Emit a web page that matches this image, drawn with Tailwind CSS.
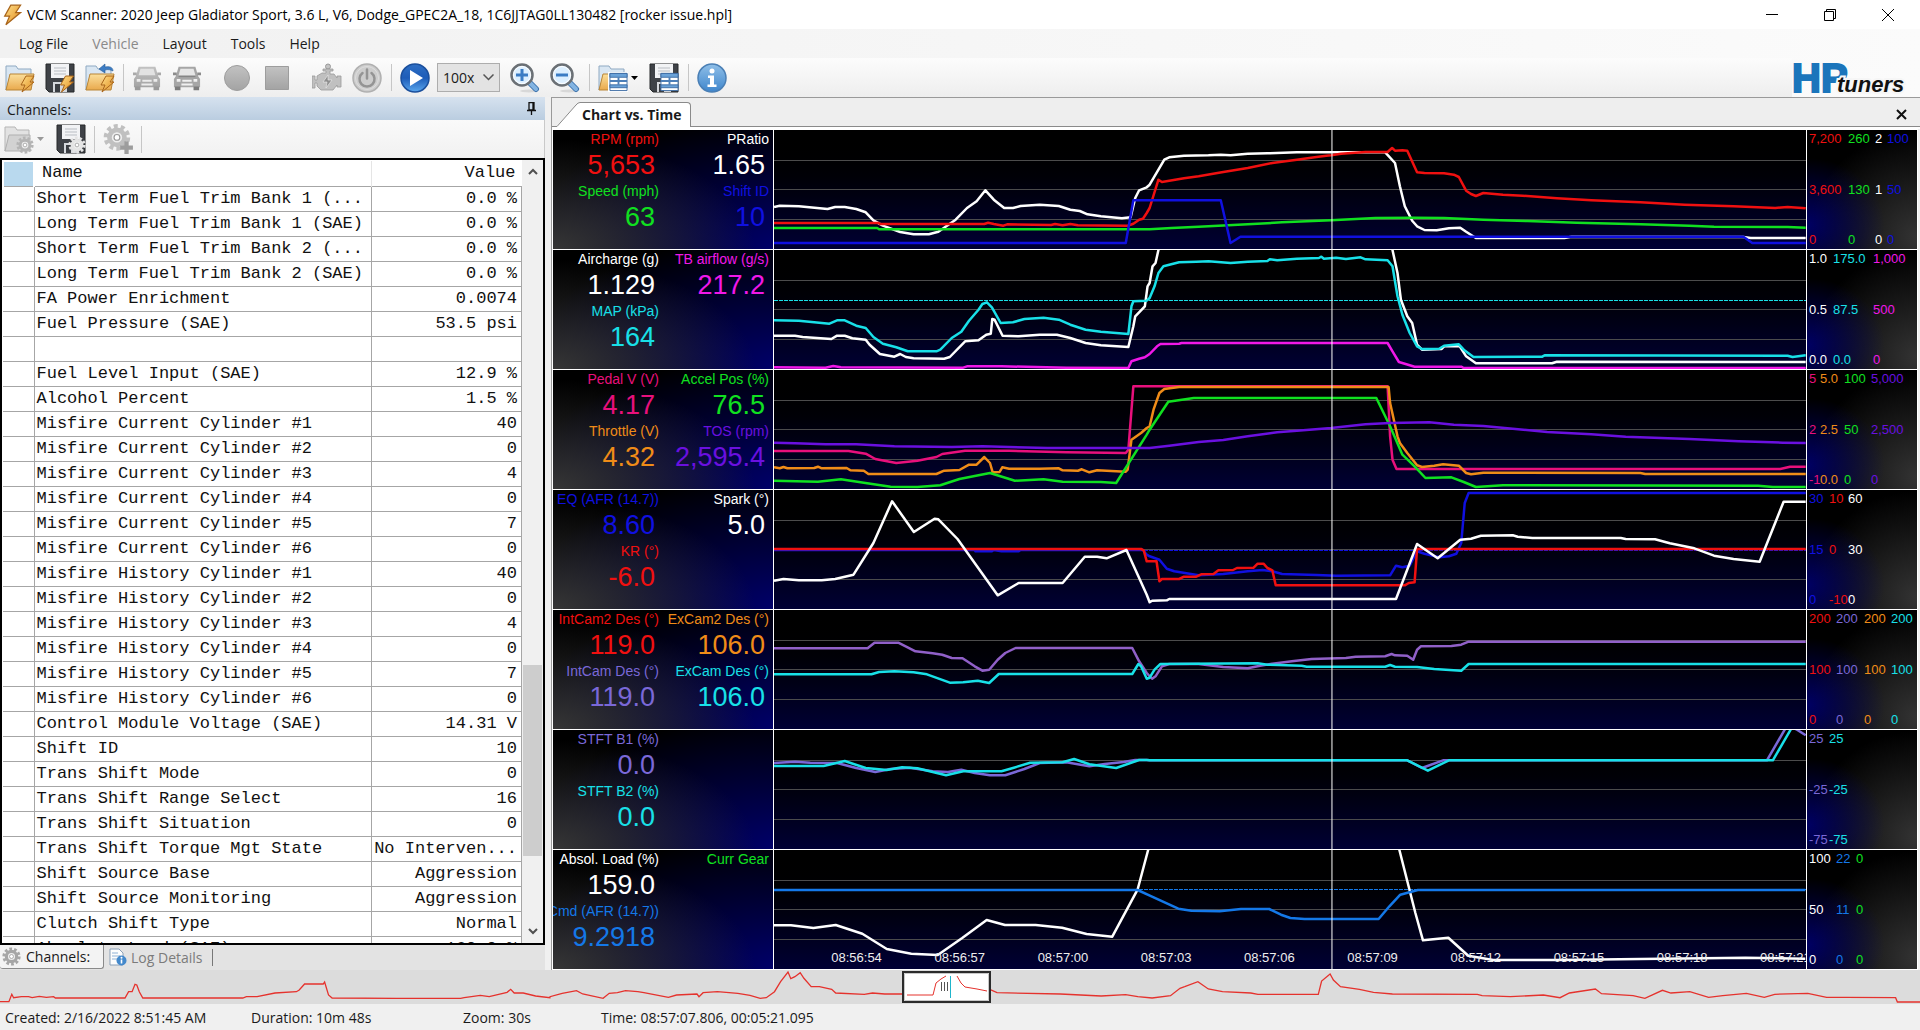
<!DOCTYPE html>
<html lang="en">
<head>
<meta charset="utf-8">
<title>VCM Scanner</title>
<script src="https://cdn.jsdelivr.net/npm/@tailwindcss/browser@4"></script>
</head>
<body class="flex h-screen flex-col overflow-hidden bg-[#f0f0f0] font-['Open_Sans','Noto_Sans',sans-serif] text-[14px] text-[#1a1a1a]">

<!-- shared icon parts -->
<svg width="0" height="0" class="absolute" aria-hidden="true">
  <defs>
    <linearGradient id="gFolder" x1="0" y1="0" x2="0" y2="1"><stop offset="0" stop-color="#fbdf9c"/><stop offset="1" stop-color="#e9a94c"/></linearGradient>
    <linearGradient id="gBolt" x1="0" y1="0" x2="1" y2="1"><stop offset="0" stop-color="#ffe08a"/><stop offset="1" stop-color="#e08a1c"/></linearGradient>
    <linearGradient id="gGray" x1="0" y1="0" x2="0" y2="1"><stop offset="0" stop-color="#c2c2c2"/><stop offset="1" stop-color="#a3a3a3"/></linearGradient>
    <linearGradient id="gPlay" x1="0" y1="0" x2="0" y2="1"><stop offset="0" stop-color="#2e6fc4"/><stop offset=".5" stop-color="#1d5cb8"/><stop offset="1" stop-color="#5aa7ee"/></linearGradient>
    <linearGradient id="gInfo" x1="0" y1="0" x2="0" y2="1"><stop offset="0" stop-color="#8fbfe8"/><stop offset="1" stop-color="#3f86cc"/></linearGradient>
    <symbol id="bolt" viewBox="0 0 16 18"><path d="M7 1h8l-4 6h4L3 17l3-7H2z" fill="url(#gBolt)" stroke="#a8641a" stroke-width="1"/></symbol>
    <symbol id="folder" viewBox="0 0 30 30"><path d="M1 27V3h10l2 3h13v6H6z" fill="#d9e6f2" stroke="#8fa9c2"/><path d="M5 11h24l-3 16H1z" fill="url(#gFolder)" stroke="#b98536"/></symbol>
    <symbol id="folderGray" viewBox="0 0 30 30"><path d="M1 27V3h10l2 3h12v6H6z" fill="#e2e2e2" stroke="#b5b5b5"/><path d="M5 11h21v16H1z" fill="#d2d2d2" stroke="#b0b0b0"/></symbol>
    <symbol id="floppy" viewBox="0 0 30 30"><path d="M1 1h28v28H4l-3-3z" fill="#3f4247" stroke="#26282b"/><path d="M6 1h18v14H6z" fill="#f2f3f5"/><path d="M9 5h12M9 8h12M9 11h12" stroke="#b9bdc3"/><path d="M8 19h14v10H8z" fill="#d5d8dc"/><path d="M10 21h5v8h-5z" fill="#3a3d42"/></symbol>
    <symbol id="grid" viewBox="0 0 20 20"><path d="M1 1h18v18H1z" fill="#fff" stroke="#3f6ea5"/><path d="M1 1h18v4H1zM1 13h18v3H1z" fill="#6aa2d8" stroke="#3f6ea5"/><path d="M10 5v8M1 9h18" stroke="#4d7fb8" stroke-width="2"/></symbol>
    <symbol id="car" viewBox="0 0 30 30"><path d="M6 3h18l3 10 2 3v9H1v-9l2-3z" fill="url(#gGray)"/><path d="M8 5h14l2 7H6z" fill="#e2e2e2"/><path d="M2 24h6v4H2zM22 24h6v4h-6z" fill="#9a9a9a"/><path d="M4 16h4v3H4zM22 16h4v3h-4zM10 17h10v2H10zM9 21h12v2H9z" fill="#ececec"/><path d="M0 9h4v3H0zM26 9h4v3h-4z" fill="#aaa"/></symbol>
    <symbol id="carDark" viewBox="0 0 30 30"><path d="M6 3h18l3 10 2 3v9H1v-9l2-3z" fill="#a6a6a6"/><path d="M8 5h14l2 7H6z" fill="#e6e6e6"/><path d="M2 24h6v4H2zM22 24h6v4h-6z" fill="#7c7c7c"/><path d="M4 16h4v3H4zM22 16h4v3h-4zM10 17h10v2H10zM9 21h12v2H9z" fill="#f0f0f0"/><path d="M6 13.500h18" stroke="#7e7e7e"/><path d="M0 9h4v3H0zM26 9h4v3h-4z" fill="#8c8c8c"/></symbol>
    <symbol id="gear" viewBox="0 0 24 24"><circle cx="12" cy="12" r="9.5" fill="none" stroke="currentColor" stroke-width="4" stroke-dasharray="3.4 2.57"/><circle cx="12" cy="12" r="6.5" fill="#eee" stroke="currentColor" stroke-width="4"/><circle cx="12" cy="12" r="2.5" fill="#fff" stroke="#999"/></symbol>
    <symbol id="lens" viewBox="0 0 30 30"><ellipse cx="19" cy="28" rx="9" ry="1.500" fill="#d8d8d8"/><path d="M19 19l7 7" stroke="#3d73ad" stroke-width="6" stroke-linecap="round"/><path d="M20 20l6 6" stroke="#83b4e2" stroke-width="4" stroke-linecap="round"/><circle cx="12" cy="12" r="10.500" fill="#dcefff" stroke="#6b7075" stroke-width="2.500"/><circle cx="12" cy="12" r="8.500" fill="none" stroke="#fff"/></symbol>
  </defs>
</svg>

<header class="shrink-0">
  <div class="flex h-[29px] items-center bg-white pl-[2px] text-black">
    <svg class="h-[22px] w-[20px]"><use href="#bolt"/></svg>
    <h1 class="ml-[5px] flex-1 text-[14px] whitespace-nowrap">VCM Scanner: 2020 Jeep Gladiator Sport, 3.6 L, V6, Dodge_GPEC2A_18, 1C6JJTAG0LL130482 [rocker issue.hpl]</h1>
    <button aria-label="Minimize" class="flex w-[58px] justify-center"><svg class="h-[12px] w-[12px]" viewBox="0 0 12 12"><path d="M0 5.500h12" stroke="#000"/></svg></button>
    <button aria-label="Restore" class="flex w-[58px] justify-center"><svg class="h-[12px] w-[12px]" viewBox="0 0 12 12"><path d="M.5 2.500h9v9h-9zM2.500 2.500v-2h9v9h-2" fill="none" stroke="#000"/></svg></button>
    <button aria-label="Close" class="mr-[3px] flex w-[58px] justify-center"><svg class="h-[12px] w-[12px]" viewBox="0 0 12 12"><path d="M0 0l12 12M12 0L0 12" stroke="#000"/></svg></button>
  </div>
  <div class="flex bg-gradient-to-r from-[#f1f1f1] to-[#fbfbfb]">
    <div class="flex-1">
      <nav class="flex h-[29px] items-center gap-[24px] pl-[19px] text-[14px]">
        <button>Log File</button><button class="text-[#8a8a8a]" disabled>Vehicle</button><button>Layout</button><button>Tools</button><button>Help</button>
      </nav>
      <div class="flex h-[39px] items-center bg-gradient-to-b from-[#fcfcfc] to-[#eeeeee]">
        <button aria-label="Open log" class="flex w-[40px] justify-center"><svg class="size-[30px]" viewBox="0 0 30 30"><use href="#folder"/><use href="#bolt" x="14" y="12" width="16" height="18"/></svg></button>
        <button aria-label="Save log" class="flex w-[40px] justify-center"><svg class="size-[30px]" viewBox="0 0 30 30"><use href="#floppy"/><use href="#bolt" x="13" y="12" width="17" height="18"/></svg></button>
        <button aria-label="Revert log" class="flex w-[40px] justify-center"><svg class="size-[30px]" viewBox="0 0 30 30"><use href="#folder"/><path d="M28 8c0-4-4-5-8-4V1l-6 5 6 4V7c3-1 6 0 8 1z" fill="#3c7cc4" stroke="#255a96" stroke-width=".6"/><use href="#bolt" x="14" y="12" width="16" height="18"/></svg></button>
        <span class="mx-[3px] h-[27px] w-px bg-[#c6c6c6]"></span>
        <button aria-label="Connect" disabled class="flex w-[40px] justify-center"><svg class="size-[28px]"><use href="#car"/></svg></button>
        <button aria-label="Vehicle info" disabled class="flex w-[40px] justify-center"><svg class="size-[28px]"><use href="#carDark"/></svg></button>
        <button aria-label="Record" disabled class="ml-[10px] flex w-[40px] justify-center"><svg class="size-[26px]" viewBox="0 0 26 26"><circle cx="13" cy="13" r="12.500" fill="url(#gGray)" stroke="#9d9d9d"/></svg></button>
        <button aria-label="Stop" disabled class="flex w-[40px] justify-center"><svg class="size-[24px]" viewBox="0 0 24 24"><path d="M.5.500h23v23H.5z" fill="url(#gGray)" stroke="#9d9d9d"/></svg></button>
        <button aria-label="Engine" disabled class="ml-[10px] flex w-[40px] justify-center"><svg class="size-[30px]" viewBox="0 0 30 30"><circle cx="16" cy="3.500" r="2.500" fill="#c4c4c4" stroke="#999"/><path d="M11 6h10v2h-3v3h4l3 4v-2h4v11h-4v-2l-4 5H9l-4-4v-3H3v5H0V13h3v4h2v-4l5-3h4V8h-3z" fill="#c0c0c0" stroke="#999" stroke-width=".8"/><path d="M16 12l-5 7h4l-1 6 6-8h-4z" fill="#8f8f8f" stroke="#eee" stroke-width=".6"/></svg></button>
        <button aria-label="Power" disabled class="flex w-[40px] justify-center"><svg class="size-[30px]" viewBox="0 0 30 30"><circle cx="15" cy="15" r="14" fill="#cdcdcd" stroke="#b0b0b0" stroke-width="1.500"/><circle cx="15" cy="15" r="11.500" fill="none" stroke="#dedede"/><path d="M10.500 10a7.500 7.500 0 1 0 9 0M15 6.500v9" fill="none" stroke="#949494" stroke-width="2.500" stroke-linecap="round"/></svg></button>
        <span class="mx-[4px] h-[27px] w-px bg-[#c6c6c6]"></span>
        <button aria-label="Play" class="flex w-[38px] justify-center"><svg class="size-[30px]" viewBox="0 0 30 30"><circle cx="15" cy="15" r="14" fill="url(#gPlay)" stroke="#1a4f9c" stroke-width="1.500"/><path d="M10 7l13 8-13 8z" fill="#fff"/></svg></button>
        <div class="relative ml-[3px] h-[29px] w-[63px]">
          <select aria-label="Playback speed" class="size-full appearance-none border border-[#adadad] bg-[#e3e3e3] pl-[5px] text-[14px]"><option>100x</option></select>
          <svg class="pointer-events-none absolute top-[11px] right-[6px] h-[7px] w-[11px]" viewBox="0 0 11 7"><path d="M.5.500l5 5 5-5" fill="none" stroke="#555" stroke-width="1.500"/></svg>
        </div>
        <button aria-label="Zoom in" class="ml-[5px] flex w-[40px] justify-center"><svg class="size-[30px]" viewBox="0 0 30 30"><use href="#lens"/><path d="M12 6v12M6 12h12" stroke="#3b7cc4" stroke-width="3"/></svg></button>
        <button aria-label="Zoom out" class="flex w-[40px] justify-center"><svg class="size-[30px]" viewBox="0 0 30 30"><use href="#lens"/><path d="M6 12h12" stroke="#3b7cc4" stroke-width="3"/></svg></button>
        <span class="mx-[4px] h-[27px] w-px bg-[#c6c6c6]"></span>
        <button aria-label="Open layout" class="flex w-[50px] items-center gap-[3px] pl-[4px]"><svg class="size-[30px]" viewBox="0 0 30 30"><use href="#folder"/><path d="M10 9h20v20H10z" fill="#fff"/><use href="#grid" x="11" y="9" width="19" height="20"/></svg><svg class="h-[4px] w-[7px]" viewBox="0 0 7 4"><path d="M0 0h7L3.500 4z"/></svg></button>
        <button aria-label="Save layout" class="flex w-[40px] justify-center"><svg class="size-[30px]" viewBox="0 0 30 30"><use href="#floppy"/><use href="#grid" x="11" y="9" width="19" height="20"/></svg></button>
        <span class="mx-[4px] h-[27px] w-px bg-[#c6c6c6]"></span>
        <button aria-label="About" class="flex w-[38px] justify-center"><svg class="size-[30px]" viewBox="0 0 30 30"><circle cx="15" cy="15" r="14" fill="url(#gInfo)" stroke="#4a7fb5" stroke-width="1.500"/><circle cx="15" cy="8" r="2.500" fill="#fff"/><path d="M11 12.500h6v9h2.500V24h-9v-2.500H13V15h-2z" fill="#fff"/></svg></button>
      </div>
    </div>
    <div class="relative w-[128px] font-['Liberation_Sans',sans-serif]">
      <span class="absolute top-[28px] left-0 text-[40px] leading-[42px] font-bold text-[#1b75bb] [-webkit-text-stroke:2px_#1b75bb]">HP</span>
      <span class="absolute top-[44px] left-[45px] text-[22px] leading-[24px] font-bold text-[#111] italic [paint-order:stroke] [-webkit-text-stroke:4px_#f6f6f6]">tuners</span>
    </div>
  </div>
</header>

<main class="flex min-h-0 flex-1">
  <section class="flex w-[545px] shrink-0 flex-col">
    <div class="flex h-[23px] shrink-0 items-center justify-between bg-gradient-to-b from-[#d6e2ef] to-[#bacde0] pr-[9px] pl-[7px]">
      <h2 class="pt-px text-[14px]">Channels:</h2>
      <button aria-label="Pin"><svg class="h-[13px] w-[9px]" viewBox="0 0 9 13"><path d="M2 .5h5V8H2zM0 8.500h9M4.500 9v4M6 1v7" fill="none" stroke="#111" stroke-width="1.300"/></svg></button>
    </div>
    <div class="flex h-[38px] shrink-0 items-center border-r border-[#c9c9c9] bg-gradient-to-b from-[#fafafa] to-[#f1f1f1] pl-[4px]">
      <button aria-label="Open channels" disabled class="flex w-[47px] items-center gap-[3px] text-[#b4b4b4]"><svg class="size-[30px]" viewBox="0 0 30 30"><use href="#folderGray"/><use href="#gear" x="12" y="12" width="18" height="18"/></svg><svg class="h-[4px] w-[7px]" viewBox="0 0 7 4"><path d="M0 0h7L3.500 4z" fill="#999"/></svg></button>
      <button aria-label="Save channels" class="flex w-[40px] justify-center text-[#e4e4e4]"><svg class="size-[30px]" viewBox="0 0 30 30"><use href="#floppy"/><use href="#gear" x="12" y="12" width="18" height="18"/></svg></button>
      <span class="mx-[3px] h-[27px] w-px bg-[#c6c6c6]"></span>
      <button aria-label="Add channel" disabled class="flex w-[40px] justify-center text-[#c0c0c0]"><svg class="size-[32px]" viewBox="0 0 30 30"><use href="#gear" x="1" y="0" width="26" height="27"/><path d="M23 17v12M17 23h12" stroke="#9d9d9d" stroke-width="4"/></svg></button>
      <span class="mx-[3px] h-[27px] w-px bg-[#c6c6c6]"></span>
    </div>
    <div class="flex min-h-0 flex-1 border-2 border-black bg-white">
      <div class="min-w-0 flex-1 overflow-hidden">
        <table class="w-full table-fixed border-collapse font-['Liberation_Mono',monospace] text-[17px] leading-[24px] text-[#111]">
          <colgroup><col class="w-[31px]"><col><col class="w-[150px]"></colgroup>
          <thead><tr class="h-[25px] border-b border-[#a6a6a6]"><th class="border-2 border-b border-white border-b-[#a6a6a6] bg-[#b9d9ee]"></th><th scope="col" class="border-r border-[#e5e5e5] pl-[7px] text-left font-normal">Name</th><th scope="col" class="pr-[6px] text-right font-normal">Value</th></tr></thead>
          <tbody id="channels"></tbody>
        </table>
      </div>
      <div class="flex w-[21px] shrink-0 flex-col items-center bg-[#f0f0f0] py-[8px]">
        <svg class="h-[7px] w-[10px]" viewBox="0 0 10 7"><path d="M1 6l4-4 4 4" fill="none" stroke="#505050" stroke-width="2"/></svg>
        <div class="mt-2 flex w-[19px] flex-1 flex-col"><div class="grow-[484]"></div><div class="grow-[192] bg-[#cdcdcd]"></div><div class="grow-[64]"></div></div>
        <svg class="mt-2 h-[7px] w-[10px]" viewBox="0 0 10 7"><path d="M1 1l4 4 4-4" fill="none" stroke="#505050" stroke-width="2"/></svg>
      </div>
    </div>
    <div class="flex h-[25px] shrink-0 items-start bg-[#e3e3e3] text-[14px]">
      <button class="flex h-[24px] w-[104px] items-center gap-[5px] rounded-b-[3px] border-r border-b border-[#8a8a8a] bg-[#f3f3f3] pl-[2px]"><svg class="size-[19px] text-[#a6a6a6]"><use href="#gear"/></svg>Channels:</button>
      <button class="flex h-[24px] items-center gap-[4px] pl-[5px] text-[#7b7b7b]"><svg class="size-[18px]" viewBox="0 0 18 18"><path d="M1 1h9l4 4v12H1z" fill="#fdfdfd" stroke="#8aa0b8"/><path d="M3 5h6M3 8h8M3 11h6" stroke="#8fb2d6"/><circle cx="12.500" cy="12.500" r="5" fill="#4489cc"/><path d="M12.500 11.500v4" stroke="#fff" stroke-width="1.600"/><circle cx="12.500" cy="9.800" r="1" fill="#fff"/></svg>Log Details</button>
      <span class="mt-[4px] ml-[9px] h-[17px] w-px bg-[#777]"></span>
    </div>
  </section>

  <section class="ml-[6px] flex min-w-0 flex-1 flex-col border-t border-l border-[#9a9a9a]">
    <div class="flex h-[31px] shrink-0 items-end border-b-2 border-white bg-[#eeeeee]">
      <div class="flex h-[25px] flex-1 items-stretch">
        <svg class="h-[25px] w-[28px]" viewBox="0 0 28 25"><path d="M0 24h5L24 3q2-2.500 4-2.500V25H0z" fill="#fff"/><path d="M0 24.500h5L24 3q2-2.500 4-2.500" fill="none" stroke="#8a8a8a"/></svg>
        <button class="rounded-tr-[4px] border-t border-r border-[#8a8a8a] bg-white pr-[8px] pl-[2px] text-[14px] leading-[20px] font-bold">Chart vs. Time</button>
        <div class="flex flex-1 items-center justify-end border-b border-[#8a8a8a] pr-[13px]"><button aria-label="Close chart"><svg class="size-[11px]" viewBox="0 0 11 11"><path d="M1 1l9 9M10 1l-9 9" stroke="#111" stroke-width="2"/></svg></button></div>
      </div>
    </div>
    <div id="charts" class="mr-[2px] flex min-h-0 flex-1 flex-col border-x border-b border-white bg-black font-['Liberation_Sans',sans-serif]"></div>
  </section>
</main>

<div class="relative h-[34px] shrink-0 overflow-hidden bg-[#dcdcdc]">
  <svg id="overview" class="absolute inset-0 size-full" viewBox="0 0 1920 34" preserveAspectRatio="none"></svg>
  <div class="absolute top-px left-[47%] h-[32px] w-[89px] border-2 border-[#2b2b2b] bg-white">
    <svg class="size-full" viewBox="0 0 85 28"><path d="M.5.500h84v27H.5z" fill="none" stroke="#c8c8c8"/><path d="M3 22h26l3-12 5-4 5-3M53 3l4 7 4 4 12 2 10 2" fill="none" stroke="#e5322d"/><path d="M37.500 9v9M40.500 9v9M43.500 9v9" stroke="#555"/><path d="M46.500 3v22" stroke="#1fb5cc"/></svg>
  </div>
</div>
<footer class="grid h-[26px] shrink-0 grid-cols-[246px_212px_138px_1fr] items-center bg-[#f0f0f0] pl-[5px] text-[14px] whitespace-nowrap">
  <span>Created: 2/16/2022 8:51:45 AM</span><span>Duration: 10m 48s</span><span>Zoom: 30s</span><span>Time: 08:57:07.806, 00:05:21.095</span>
</footer>

<script>
const cyl = (kind, vals) => vals.map((v, i) => [`Misfire ${kind} Cylinder #${i + 1}`, v]);
const rows = [
  ['Short Term Fuel Trim Bank 1 (...', '0.0 %'], ['Long Term Fuel Trim Bank 1 (SAE)', '0.0 %'],
  ['Short Term Fuel Trim Bank 2 (...', '0.0 %'], ['Long Term Fuel Trim Bank 2 (SAE)', '0.0 %'],
  ['FA Power Enrichment', '0.0074'], ['Fuel Pressure (SAE)', '53.5 psi'], ['', ''],
  ['Fuel Level Input (SAE)', '12.9 %'], ['Alcohol Percent', '1.5 %'],
  ...cyl('Current', [40, 0, 4, 0, 7, 0]), ...cyl('History', [40, 0, 4, 0, 7, 0]),
  ['Control Module Voltage (SAE)', '14.31 V'], ['Shift ID', '10'], ['Trans Shift Mode', '0'],
  ['Trans Shift Range Select', '16'], ['Trans Shift Situation', '0'], ['Trans Shift Torque Mgt State', 'No Interven...'],
  ['Shift Source Base', 'Aggression'], ['Shift Source Monitoring', 'Aggression'], ['Clutch Shift Type', 'Normal'],
  ['Absolute Load (SAE)', '160.0 %'],
];
document.getElementById('channels').innerHTML = rows.map(([n, v]) =>
  `<tr class="h-[25px] border-b border-[#a6a6a6]"><td class="border-r border-[#a6a6a6]"></td><td class="overflow-hidden border-r border-[#a6a6a6] pl-[2px] whitespace-nowrap">${n}</td><td class="overflow-hidden border-r border-[#a6a6a6] pr-[4px] text-right whitespace-nowrap">${v}</td></tr>`).join('');

const C = { red: '#f01010', green: '#10e020', white: '#ffffff', blue: '#1010e0', cyan: '#18e0e8', mag: '#f018e8', pink: '#e8107c', orange: '#f08c18', violet: '#6a10e0', slate: '#7a68d8', plum: '#9060c8', sky: '#1478e8' };
const A = { x: -223.9, k: 0.3827 }, B = { x: 376, k: 0.4912 };
const A7 = { x: -223.9, k: 0.4082 }, B7 = { x: 406, k: 0.472 };
const panels = [
  { read: [['red', 'RPM (rpm)', '5,653'], ['white', 'PRatio', '1.65'], ['green', 'Speed (mph)', '63'], ['blue', 'Shift ID', '10']],
    axis: [['red', 'w-[39px]', '7,200', '3,600', '0'], ['green', 'w-[27px]', '260', '130', '0'], ['white', 'w-[12px]', '2', '1', '0'], ['blue', 'w-[24px]', '100', '50', '0']],
    y: [31, 31], traces: [
    ['white', '585,262 600,258 650,260 725,268 745,262 770,262 800,268 825,278 845,302 870,318 915,337 950,344 990,344 1015,336 1060,300 1090,265 1115,245 1138,212 1160,240 1187,265 1210,265 1230,259 1280,255 1330,259 1360,270 1385,274 1405,284 1440,290 1495,296 1518,293 1530,235 1540,212 1560,203', '0,195 30,120 40,113 70,108 120,107 145,105 165,107 200,102 240,101 300,98 480,98 500,130 510,200 520,260 535,303 545,320 560,331 585,332 610,326 633,324 645,336 665,355 845,355 860,351 1210,352 1225,355 1337,355'],
    ['red', '585,310 860,310 862,313 1135,313 1145,309 1160,313 1185,318 1195,314 1310,316 1320,313 1340,317 1360,313 1380,317 1510,318 1525,312 1540,300 1550,297 1560,280', '0,265 18,180 25,187 70,176 100,170 150,157 200,145 250,130 300,120 340,112 360,108 370,107 390,102 440,97 485,97 494,85 500,93 515,92 525,93 545,158 560,160 600,161 620,165 630,172 645,213 655,223 665,229 680,220 720,225 760,228 830,236 900,242 1000,248 1090,255 1190,260 1275,265 1300,262 1337,266'],
    ['green', '585,325 855,325 860,329 1560,329', '0,329 45,325 100,321 200,314 270,308 370,302 460,295 540,294 600,295 680,300 770,304 870,309 1000,314 1100,318 1150,321 1300,322 1337,324'],
    ['blue', '585,370 1505,370 1525,242 1560,242', '0,242 145,242 165,370 185,351 1210,351 1228,370 1337,370']] },
  { read: [['white', 'Aircharge (g)', '1.129'], ['mag', 'TB airflow (g/s)', '217.2'], ['cyan', 'MAP (kPa)', '164'], null],
    axis: [['white', 'w-[24px]', '1.0', '0.5', '0.0'], ['cyan', 'w-[40px]', '175.0', '87.5', '0.0'], ['mag', 'w-[40px]', '1,000', '500', '0']],
    dash: ['cyan', 50], y: [391, 391], traces: [
    ['white', '585,648 640,648 660,652 735,658 750,648 770,648 790,656 825,660 835,675 862,703 900,711 915,703 930,712 950,716 1030,717 1045,712 1085,665 1120,662 1140,645 1152,642 1156,598 1162,600 1183,648 1225,650 1280,645 1325,645 1360,655 1400,670 1440,677 1512,682 1525,620 1530,590 1555,560 1562,500', '0,490 6,440 12,430 18,391 30,300 485,300 495,391 505,460 512,540 525,590 535,610 545,675 555,690 595,688 600,680 632,680 645,710 665,731 820,731 830,726 1337,727'],
    ['cyan', '585,602 650,603 730,612 750,602 770,602 800,618 825,625 845,652 870,672 905,683 935,695 1010,695 1020,690 1050,655 1075,636 1095,603 1120,570 1130,553 1142,548 1155,563 1178,610 1210,608 1240,598 1290,594 1330,600 1360,615 1400,630 1440,636 1512,643 1520,560 1525,545 1560,543', '0,535 10,500 18,460 28,440 60,428 95,426 120,425 165,430 200,426 240,424 245,419 260,422 300,417 345,415 350,411 355,417 380,414 400,418 430,413 440,419 485,422 495,440 505,530 515,585 530,640 545,680 555,688 590,687 600,678 630,674 640,690 660,712 800,711 805,707 1300,708 1310,712 1337,707'],
    ['mag', '585,743 720,744 740,739 760,743 1080,744 1090,740 1180,740 1350,744 1512,745 1520,725 1540,717 1555,713', '0,703 15,680 22,673 60,672 65,670 485,670 495,695 508,727 520,732 540,741 635,741 640,745 1337,745']] },
  { read: [['pink', 'Pedal V (V)', '4.17'], ['green', 'Accel Pos (%)', '76.5'], ['orange', 'Throttle (V)', '4.32'], ['violet', 'TOS (rpm)', '2,595.4']],
    axis: [['pink', 'w-[11px]', '5', '2', '-1'], ['orange', 'w-[24px]', '5.0', '2.5', '0.0'], ['green', 'w-[27px]', '100', '50', '0'], ['violet', 'w-[40px]', '5,000', '2,500', '0']],
    y: [751, 751], traces: [
    ['pink', '585,994 780,994 825,1002 850,1018 905,1030 960,1023 1010,1012 1025,1003 1085,993 1200,993 1350,998 1505,1000 1512,990 1525,800 1560,800', '0,800 485,800 490,950 495,1020 503,1048 1285,1048 1305,1041 1337,1041'],
    ['orange', '585,1043 600,1046 610,1042 620,1046 690,1045 700,1041 710,1046 775,1045 785,1052 820,1053 832,1063 1010,1063 1030,1053 1070,1051 1095,1035 1115,1035 1135,1012 1150,1030 1157,1058 1175,1057 1182,1043 1200,1047 1280,1047 1330,1046 1340,1052 1380,1053 1390,1049 1410,1058 1430,1052 1505,1056 1510,1050 1520,960 1545,940 1560,925', '0,920 8,870 20,820 30,808 60,802 487,802 490,850 505,950 510,970 525,1000 545,1037 555,1042 580,1038 598,1034 630,1038 645,1060 655,1064 680,1059 1000,1060 1010,1063 1337,1063'],
    ['green', '585,1083 700,1086 760,1079 820,1089 890,1101 960,1102 1020,1097 1070,1078 1150,1060 1215,1083 1290,1079 1340,1086 1440,1087 1480,1090 1560,945', '0,930 38,846 90,835 462,835 490,920 515,1005 540,1040 562,1075 615,1073 640,1087 665,1102 720,1097 1240,1098 1270,1102 1337,1102'],
    ['violet', '585,969 640,971 720,974 800,974 900,980 1050,982 1130,980 1300,985 1560,985', '0,985 40,978 100,967 150,961 200,950 260,938 300,933 370,925 440,914 490,910 570,908 620,915 680,919 740,927 810,937 900,944 970,951 1100,958 1200,965 1290,969 1337,970']] },
  { read: [['blue', 'EQ (AFR (14.7))', '8.60'], ['white', 'Spark (°)', '5.0'], ['red', 'KR (°)', '-6.0'], null],
    axis: [['blue', 'w-[20px]', '30', '15', '0'], ['red', 'w-[19px]', '10', '0', '-10'], ['white', 'w-[24px]', '60', '30', '0']],
    dash: ['blue', 60], y: [31, 31], traces: [
    ['blue', '585,211 1110,211 1112,215 1155,215 1160,211 1180,215 1225,215 1230,211 1550,211 1560,225', '0,230 20,240 35,267 50,275 100,287 150,283 200,275 230,271 250,275 270,283 340,286 380,288 490,287 502,258 515,263 530,258 545,215 560,222 590,233 610,230 625,222 635,190 642,70 650,40 1337,40'],
    ['red', '585,208 1545,208 1552,212 1560,245', '0,245 14,245 20,305 25,298 60,298 70,291 95,291 105,284 130,283 140,272 170,271 178,265 212,264 220,252 232,252 240,265 250,272 257,317 520,317 528,310 540,308 545,208 1337,208'],
    ['white', '585,303 610,298 650,302 710,302 745,298 793,285 845,190 894,65 951,157 1005,117 1015,119 1065,178 1170,347 1225,310 1340,310 1398,231 1430,231 1455,236 1507,211 1560,345', '0,368 5,363 35,362 40,358 502,358 545,193 587,236 633,180 655,177 675,168 740,167 750,171 780,175 960,175 970,178 1030,179 1060,191 1110,206 1150,228 1190,238 1243,246 1292,66 1337,66']] },
  { read: [['red', 'IntCam2 Des (°)', '119.0'], ['orange', 'ExCam2 Des (°)', '106.0'], ['slate', 'IntCam Des (°)', '119.0'], ['cyan', 'ExCam Des (°)', '106.0']],
    axis: [['red', 'w-[27px]', '200', '100', '0'], ['slate', 'w-[28px]', '200', '100', '0'], ['orange', 'w-[27px]', '200', '100', '0'], ['cyan', 'w-[24px]', '200', '100', '0']],
    y: [391, 391], traces: [
    ['plum', '585,506 830,506 848,489 910,489 955,515 1000,521 1025,525 1050,535 1078,536 1110,560 1130,573 1148,570 1170,540 1190,520 1217,505 1522,505 1540,545 1560,580', '0,590 5,597 12,590 25,560 40,553 100,553 150,562 200,566 225,558 250,552 290,545 330,538 400,535 420,531 480,530 493,523 500,527 525,528 537,540 545,510 553,500 615,499 635,495 650,486 1337,486'],
    ['cyan', '585,584 840,584 860,577 900,575 950,578 985,584 1045,609 1080,608 1118,603 1148,610 1173,583 1522,583 1538,553 1545,560 1560,597', '0,594 10,570 22,553 220,551 240,555 310,558 320,561 480,561 490,556 500,561 545,562 580,568 635,573 650,553 1337,553']] },
  { read: [['slate', 'STFT B1 (%)', '0.0'], null, ['cyan', 'STFT B2 (%)', '0.0'], null],
    axis: [['slate', 'w-[20px]', '25', '-25', '-75'], ['cyan', 'w-[30px]', '25', '-25', '-75']],
    y: [751, 751], traces: [
    ['slate', '585,850 640,846 680,849 750,850 800,865 850,877 890,868 940,864 1000,875 1040,877 1075,870 1110,880 1150,887 1190,887 1240,868 1280,850 1350,848 1410,860 1450,853 1500,847 1530,841 1560,841', '0,842 525,842 555,865 598,842 1258,842 1300,735 1320,751 1337,767'],
    ['cyan', '585,859 715,859 770,844 825,865 880,871 920,863 960,866 1035,887 1080,875 1180,875 1210,865 1255,849 1340,848 1370,838 1410,854 1480,865 1540,841 1560,841', '0,842 525,842 567,873 610,842 1270,842 1312,735']] },
  { read: [['white', 'Absol. Load (%)', '159.0'], ['green', 'Curr Gear', ''], ['sky', 'Cmd (AFR (14.7))', '9.2918'], null],
    axis: [['white', 'w-[27px]', '100', '50', '0'], ['sky', 'w-[20px]', '22', '11', '0'], ['green', 'w-[20px]', '0', '0', '0']],
    dash: ['sky', 39], y: [31, 391], seg: [A7, B7], times: true, traces: [
    ['white', '548,257 590,257 645,265 700,256 765,282 825,328 885,342 950,346 1010,295 1070,241 1115,256 1190,256 1255,264 1315,283 1378,291 1440,150 1466,31 1485,-60', '455,330 466,391 500,580 516,662 570,654 612,708 665,721 800,721 1200,714 1327,717'],
    ['sky', '548,151 1440,151 1470,168 1540,207', '25,573 85,575 130,568 190,568 215,585 235,595 265,598 422,598 445,560 468,525 505,511 1327,511']] },
];
const scale = (pts, s, y0) => pts.split(' ').map(p => { const [x, y] = p.split(',').map(Number); return `${(s.x + x * s.k).toFixed(1)},${((y - y0) / 3).toFixed(1)}`; }).join(' ');
const line = (x1, y1, x2, y2, c, extra = '') => `<line x1="${x1}" y1="${y1}" x2="${x2}" y2="${y2}" stroke="${c}" vector-effect="non-scaling-stroke" ${extra}/>`;
const readout = r => r ? `<div class="flex flex-col items-end overflow-hidden whitespace-nowrap" style="color:${C[r[0]]}"><span class="h-[18px] text-[14px] leading-[18px]">${r[1]}</span><span class="h-[34px] pr-[4px] text-[27px] leading-[34px]">${r[2]}</span></div>` : '<div></div>';
const clock = ['08:56:54', '08:56:57', '08:57:00', '08:57:03', '08:57:06', '08:57:09', '08:57:12', '08:57:15', '08:57:18', '08:57:21'];
document.getElementById('charts').innerHTML = panels.map(p => {
  const seg = p.seg || [A, B];
  return `<div class="flex min-h-0 flex-1 border-t border-white">
    <div class="grid w-[221px] shrink-0 grid-cols-[106px_1fr] content-start overflow-hidden border-r border-white bg-[radial-gradient(ellipse_at_0%_100%,#363636_0%,transparent_65%),radial-gradient(ellipse_at_105%_100%,#00006c_0%,transparent_80%)] pr-[4px] font-['Liberation_Sans',sans-serif]">${p.read.map(readout).join('')}</div>
    <div class="relative min-w-0 flex-1 overflow-hidden bg-gradient-to-b from-black to-[#000034]">
      <svg class="absolute inset-0 size-full" viewBox="0 0 1033 119" preserveAspectRatio="none">
        ${[30.5, 59.5, 89.5].map(y => line(0, y, 1033, y, '#4c4c4c')).join('')}
        ${p.dash ? line(0, p.dash[1] + .5, 1033, p.dash[1] + .5, C[p.dash[0]], 'stroke-dasharray="4 1"') : ''}
        ${p.traces.map(t => `<polyline points="${scale(t[1], seg[0], p.y[0])} ${scale(t[2], seg[1], p.y[1])}" fill="none" stroke="${C[t[0]]}" stroke-width="2.5" stroke-linejoin="round" vector-effect="non-scaling-stroke"/>`).join('')}
        ${line(558.5, 0, 558.5, 119, '#fff')}
      </svg>
      ${p.times ? `<div class="absolute bottom-px left-[3%] grid w-full grid-cols-10 text-center text-[13px] leading-[20px] text-[#eee]">${clock.map(c => `<span>${c}</span>`).join('')}</div>` : ''}
    </div>
    <div class="flex w-[111px] shrink-0 border-l border-white bg-[radial-gradient(ellipse_at_0%_80%,#000064_0%,transparent_50%),radial-gradient(ellipse_at_100%_90%,#333_0%,transparent_70%)] pl-[2px] text-[13px] leading-[18px]">${p.axis.map(a => `<div class="flex h-full shrink-0 flex-col justify-between whitespace-nowrap ${a[1]}" style="color:${C[a[0]]}"><span>${a[2]}</span><span>${a[3]}</span><span>${a[4]}</span></div>`).join('')}</div>
  </div>`;
}).join('');

const over = [
  [{ x: 0, k: 0.3571 }, 840, '0,935 25,935 33,913 38,923 60,920 80,920 90,923 110,919 130,922 150,920 155,924 350,924 360,905 370,905 378,883 383,885 390,905 400,924 680,924 690,920 720,920 770,909 830,905 838,900 853,882 905,882 909,876 920,915 930,924 1110,925 1290,925 1300,923 1345,916 1370,920 1420,907 1430,898 1440,909 1465,909 1500,918 1540,923'],
  [{ x: 550, k: 0.4082 }, 390, '0,470 30,460 65,452 80,462 130,475 145,460 165,458 185,452 215,455 230,458 290,472 310,465 360,462 365,470 375,458 410,455 460,460 490,466 515,475 530,473 550,455 565,425 583,396 590,416 600,410 613,398 622,415 640,440 660,440 690,448 700,459 770,463 790,459 820,462 865,462 1080,450 1095,458 1250,462 1350,468 1410,464 1440,470 1475,474 1520,467'],
  [{ x: 1180, k: 0.472 }, 750, '0,805 10,800 38,785 60,807 90,815 150,819 165,823 293,823 300,783 318,762 325,780 340,800 380,808 410,817 450,822 630,823 640,827 700,830 770,825 805,833 825,819 880,807 893,821 960,827 985,835 1022,811 1040,819 1080,815 1120,832 1150,827 1200,820 1238,832 1260,823 1330,820 1370,832 1410,832 1516,833 1520,846 1568,846'],
];
document.getElementById('overview').innerHTML = `<polyline points="${over.map(o => scale(o[2], o[0], o[1])).join(' ')}" fill="none" stroke="#e5322d" stroke-width="1.300" vector-effect="non-scaling-stroke"/>`;
</script>
</body>
</html>
